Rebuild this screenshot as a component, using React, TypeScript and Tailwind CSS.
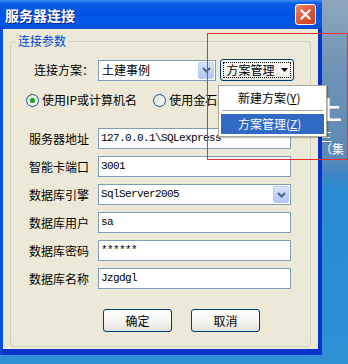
import React from "react";

const mono = "font-['Liberation_Mono','Noto_Sans_CJK_SC',monospace] text-[11px] tracking-[-0.6px]";

function ComboArrow() {
  return (
    <div className="flex h-[17px] w-[16px] items-center justify-center rounded-[2px] border border-[#b9cdf7] bg-[linear-gradient(180deg,#dbe6fd_0%,#c1d3fb_50%,#b2c8f6_100%)]">
      <svg width="9" height="6" viewBox="0 0 9 6">
        <polyline points="1,1 4.5,4.5 8,1" fill="none" stroke="#4d6185" strokeWidth="2" />
      </svg>
    </div>
  );
}

function TextField({ value, combo = false }: { value: string; combo?: boolean }) {
  return (
    <div className="flex h-[21px] w-[193px] items-center border border-[#7f9db9] bg-white pl-[2px] pr-px">
      <span className={`flex-1 ${mono} text-black`}>{value}</span>
      {combo && <ComboArrow />}
    </div>
  );
}

function XpButton({ children, focused = false, className = "" }: { children: React.ReactNode; focused?: boolean; className?: string }) {
  return (
    <div className={`flex items-center justify-center rounded-[3px] border border-[#003c74] bg-[linear-gradient(180deg,#ffffff_0%,#f4f4f0_60%,#e3e2da_100%)] p-[2px] ${className}`}>
      <div className={`flex h-full w-full items-center justify-center ${focused ? "border border-dotted border-black" : ""}`}>
        {children}
      </div>
    </div>
  );
}

function Radio({ checked }: { checked: boolean }) {
  return (
    <div className="flex h-[13px] w-[13px] items-center justify-center rounded-full border border-[#1c5180] bg-[linear-gradient(135deg,#dcdcd6_0%,#ffffff_100%)]">
      {checked && <div className="h-[5px] w-[5px] rounded-full bg-[#21a121] shadow-[0_0_1px_#6fd46f]" />}
    </div>
  );
}

const fields = [
  { label: "服务器地址", value: "127.0.0.1\\SQLexpress" },
  { label: "智能卡端口", value: "3001" },
  { label: "数据库引擎", value: "SqlServer2005", combo: true },
  { label: "数据库用户", value: "sa" },
  { label: "数据库密码", value: "******" },
  { label: "数据库名称", value: "Jzgdgl" },
];

export default function App() {
  return (
    <div className="relative h-[364px] w-[348px] overflow-hidden bg-[linear-gradient(180deg,#8ea6bc_0%,#6d93b6_20%,#5b8ab5_44%,#3f86c6_48%,#2a8ad2_52%,#2f90d6_100%)] font-['Noto_Sans_CJK_SC',sans-serif] text-[12px] text-black">
      {/* desktop behind the window */}
      <span className="absolute left-[316px] top-[96px] text-[26px] font-medium leading-none text-white">上</span>
      <span className="absolute left-[320px] top-[131px] text-[12px] leading-none text-white">三（集</span>

      <div className="relative flex w-[322px] flex-col">
        {/* title bar */}
        <div className="flex h-[29px] items-center justify-between bg-[linear-gradient(180deg,#3d8cf4_0%,#0a5de8_12%,#0054e3_45%,#0058ea_80%,#0a4fd6_100%)] pl-[5px] pr-[6px]">
          <span className="text-[14px] font-bold leading-none text-white [text-shadow:1px_1px_0_#0a1f8a]">服务器连接</span>
          <div className="flex h-[21px] w-[21px] items-center justify-center rounded-[3px] border border-white bg-[linear-gradient(135deg,#f08a6c_0%,#e35a3c_45%,#c53d1c_100%)]">
            <svg width="11" height="11" viewBox="0 0 11 11">
              <path d="M1.5 1.5 L9.5 9.5 M9.5 1.5 L1.5 9.5" stroke="white" strokeWidth="2.2" strokeLinecap="square" />
            </svg>
          </div>
        </div>

        {/* body */}
        <div className="flex h-[326px] flex-col border-b-[6px] border-l-[3px] border-r-[4px] border-b-[#0a34c8] border-l-[#0a50dc] border-r-[#0a34c8] bg-[#ece9d8] px-[7px] pb-[2px] pt-[12px]">
          <div className="relative flex flex-1 flex-col rounded-[4px] border border-[#d0d0bf] pl-[18px]">
            <span className="absolute left-[5px] top-[-8px] bg-[#ece9d8] px-[2px] leading-[14px] text-[#0046d5]">连接参数</span>

            {/* scheme row */}
            <div className="mt-[17px] flex h-[22px] items-center">
              <span className="ml-[5px] w-[64px] leading-[22px]">连接方案：</span>
              <div className="flex h-[21px] w-[118px] items-center border border-[#7f9db9] bg-white pl-[3px] pr-px">
                <span className="flex-1 leading-none">土建事例</span>
                <ComboArrow />
              </div>
              <XpButton focused className="ml-[4px] h-[22px] w-[74px]">
                <span className="leading-none">方案管理</span>
                <svg className="ml-[6px]" width="7" height="4" viewBox="0 0 7 4">
                  <path d="M0 0 H7 L3.5 4 Z" fill="black" />
                </svg>
              </XpButton>
            </div>

            {/* radios */}
            <div className="mt-[12px] flex h-[14px] items-center">
              <div className="-ml-[3px] flex items-center gap-[3px]">
                <Radio checked />
                <span className="leading-none">使用IP或计算机名</span>
              </div>
              <div className="ml-[16px] flex items-center gap-[3px]">
                <Radio checked={false} />
                <span className="leading-none">使用金石服务</span>
              </div>
            </div>

            {/* fields */}
            <div className="mt-[21px] flex flex-col gap-[7px]">
              {fields.map((f) => (
                <div key={f.label} className="flex h-[21px] items-center">
                  <span className="w-[69px] leading-none">{f.label}</span>
                  <TextField value={f.value} combo={f.combo} />
                </div>
              ))}
            </div>

            {/* buttons */}
            <div className="ml-[74px] mt-[20px] flex gap-[19px]">
              <XpButton className="h-[23px] w-[69px]">
                <span className="leading-none">确定</span>
              </XpButton>
              <XpButton className="h-[23px] w-[69px]">
                <span className="leading-none">取消</span>
              </XpButton>
            </div>
          </div>
        </div>
      </div>

      {/* dropdown menu */}
      <div className="absolute left-[218px] top-[85px] flex w-[109px] flex-col border border-[#aca899] bg-white px-[2px] py-[2px] shadow-[1px_1px_1px_rgba(0,0,0,0.25)]">
        <div className="flex h-[19px] items-center pl-[17px]">
          新建方案(<span className="underline">Y</span>)
        </div>
        <div className="mx-[1px] my-[3px] h-px bg-[#aca899]" />
        <div className="flex h-[20px] items-center bg-[#316ac5] pl-[17px] text-white">
          方案管理(<span className="underline">Z</span>)
        </div>
      </div>

      {/* annotation box */}
      <div className="absolute left-[207px] top-[33px] h-[127px] w-[141px] shadow-[inset_0_0_0_1px_#e8302c]" />
    </div>
  );
}
